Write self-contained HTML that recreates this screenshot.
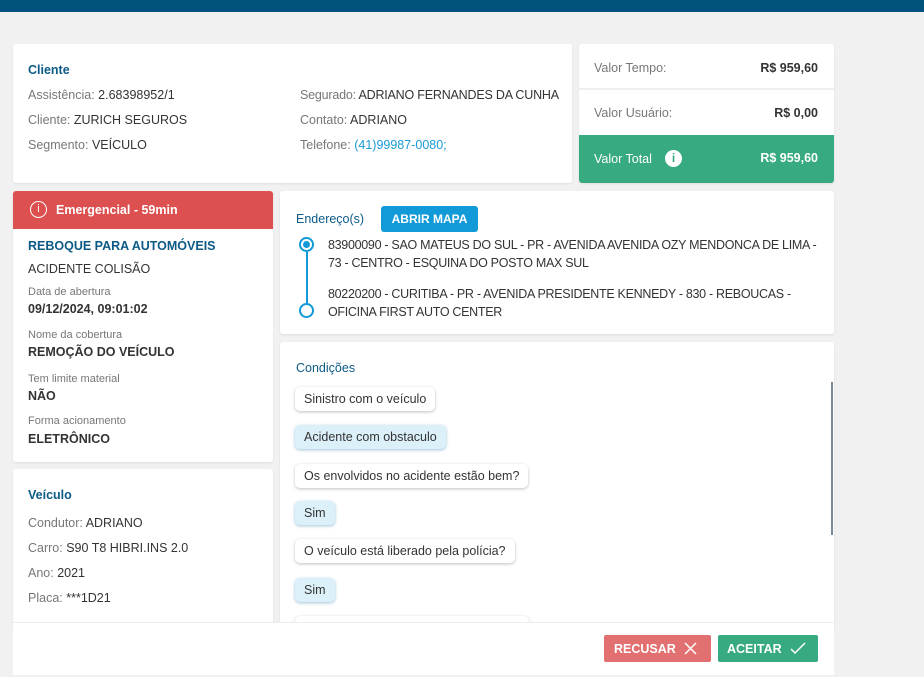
<!DOCTYPE html>
<html><head><meta charset="utf-8"><style>
*{margin:0;padding:0;box-sizing:border-box}
body{width:924px;height:677px;background:#f1f1f1;font-family:"Liberation Sans",sans-serif;font-size:12.5px;color:#333;position:relative;overflow:hidden}
.abs{position:absolute}
.card{position:absolute;background:#fff;border-radius:3px;box-shadow:0 1px 2px rgba(0,0,0,.08)}
.lbl{color:#777}
.t{color:#0d5a86;font-weight:bold;font-size:12.5px}
.chip{position:absolute;left:295px;height:24px;line-height:24px;padding:0 9px;border-radius:5px;background:#fff;box-shadow:0 1px 3px rgba(0,0,0,.25);font-size:12.5px;color:#333;white-space:nowrap}
.chip.b{background:#dcf0f9;box-shadow:0 1px 3px rgba(40,120,170,.45)}
.sm{font-size:11px;color:#777}
.bd{font-weight:bold;font-size:12.5px;color:#333}
</style></head><body>
<div class="abs" style="left:0;top:0;width:924px;height:12px;background:#02527e"></div>

<div class="card" style="left:13px;top:44px;width:559px;height:139px">
 <div class="abs t" style="left:15px;top:19px">Cliente</div>
 <div class="abs" style="left:15px;top:44px"><span class="lbl">Assistência:</span> 2.68398952/1</div>
 <div class="abs" style="left:15px;top:69px"><span class="lbl">Cliente:</span> ZURICH SEGUROS</div>
 <div class="abs" style="left:15px;top:94px"><span class="lbl">Segmento:</span> VEÍCULO</div>
 <div class="abs" style="left:287px;top:44px;white-space:nowrap;letter-spacing:-0.2px"><span class="lbl">Segurado:</span> ADRIANO FERNANDES DA CUNHA</div>
 <div class="abs" style="left:287px;top:69px"><span class="lbl">Contato:</span> ADRIANO</div>
 <div class="abs" style="left:287px;top:94px"><span class="lbl">Telefone:</span> <span style="color:#1a9ad6">(41)99987-0080;</span></div>
</div>

<div class="card" style="left:579px;top:44px;width:255px;height:139px;overflow:hidden">
 <div class="abs lbl" style="left:15px;top:17px">Valor Tempo:</div>
 <div class="abs bd" style="right:16px;top:17px">R$ 959,60</div>
 <div class="abs" style="left:0;top:44px;width:255px;height:2px;background:#eee"></div>
 <div class="abs lbl" style="left:15px;top:62px">Valor Usuário:</div>
 <div class="abs bd" style="right:16px;top:62px">R$ 0,00</div>
 <div class="abs" style="left:0;top:91px;width:255px;height:48px;background:#37aa7f"></div>
 <div class="abs" style="left:15px;top:108px;color:#fff">Valor Total</div>
 <div class="abs" style="left:86px;top:106px;width:17px;height:17px;border-radius:50%;background:#fff;color:#37aa7f;font-weight:bold;font-size:12px;text-align:center;line-height:17px">i</div>
 <div class="abs bd" style="right:16px;top:107px;color:#fff">R$ 959,60</div>
</div>

<div class="card" style="left:13px;top:191px;width:260px;height:271px;overflow:hidden">
 <div class="abs" style="left:0;top:0;width:260px;height:38px;background:#dc5050"></div>
 <div class="abs" style="left:17px;top:10px;width:17px;height:17px;border:1.5px solid #fff;border-radius:50%;color:#fff;font-size:11px;text-align:center;line-height:14px">i</div>
 <div class="abs" style="left:43px;top:12px;color:#fff;font-weight:bold;font-size:12.5px">Emergencial - 59min</div>
 <div class="abs t" style="left:15px;top:48px">REBOQUE PARA AUTOMÓVEIS</div>
 <div class="abs" style="left:15px;top:71px">ACIDENTE COLISÃO</div>
 <div class="abs sm" style="left:15px;top:95px">Data de abertura</div>
 <div class="abs bd" style="left:15px;top:111px">09/12/2024, 09:01:02</div>
 <div class="abs sm" style="left:15px;top:138px">Nome da cobertura</div>
 <div class="abs bd" style="left:15px;top:154px">REMOÇÃO DO VEÍCULO</div>
 <div class="abs sm" style="left:15px;top:182px">Tem limite material</div>
 <div class="abs bd" style="left:15px;top:198px">NÃO</div>
 <div class="abs sm" style="left:15px;top:224px">Forma acionamento</div>
 <div class="abs bd" style="left:15px;top:241px">ELETRÔNICO</div>
</div>

<div class="card" style="left:13px;top:469px;width:260px;height:160px">
 <div class="abs t" style="left:15px;top:19px">Veículo</div>
 <div class="abs" style="left:15px;top:47px"><span class="lbl">Condutor:</span> ADRIANO</div>
 <div class="abs" style="left:15px;top:72px"><span class="lbl">Carro:</span> S90 T8 HIBRI.INS 2.0</div>
 <div class="abs" style="left:15px;top:97px"><span class="lbl">Ano:</span> 2021</div>
 <div class="abs" style="left:15px;top:122px"><span class="lbl">Placa:</span> ***1D21</div>
</div>

<div class="card" style="left:280px;top:191px;width:554px;height:143px">
 <div class="abs t" style="left:16px;top:21px;font-weight:normal">Endereço(s)</div>
 <div class="abs" style="left:101px;top:15px;width:97px;height:26px;background:#129ad8;border-radius:3px;color:#fff;font-weight:bold;font-size:12px;text-align:center;line-height:26px">ABRIR MAPA</div>
 <div class="abs" style="left:19px;top:46px;width:15px;height:15px;border:2px solid #129ad8;border-radius:50%"></div>
 <div class="abs" style="left:23px;top:50px;width:7px;height:7px;background:#129ad8;border-radius:50%"></div>
 <div class="abs" style="left:25.5px;top:61px;width:2px;height:52px;background:#129ad8"></div>
 <div class="abs" style="left:19px;top:112px;width:15px;height:15px;border:2px solid #129ad8;border-radius:50%"></div>
 <div class="abs" style="left:48px;top:45px;width:520px;line-height:18px;letter-spacing:-0.3px"><span style="white-space:nowrap">83900090 - SAO MATEUS DO SUL - PR - AVENIDA AVENIDA OZY MENDONCA DE LIMA -</span><br>73 - CENTRO - ESQUINA DO POSTO MAX SUL</div>
 <div class="abs" style="left:48px;top:94px;width:520px;line-height:18px;letter-spacing:-0.3px">80220200 - CURITIBA - PR - AVENIDA PRESIDENTE KENNEDY - 830 - REBOUCAS -<br>OFICINA FIRST AUTO CENTER</div>
</div>

<div class="card" style="left:280px;top:342px;width:554px;height:290px">
 <div class="abs t" style="left:16px;top:19px;font-weight:normal">Condições</div>
 <div class="abs" style="left:551px;top:40px;width:2px;height:153px;background:#7a8a99"></div>
</div>
<div class="chip" style="top:387px">Sinistro com o veículo</div>
<div class="chip b" style="top:425px">Acidente com obstaculo</div>
<div class="chip" style="top:464px">Os envolvidos no acidente estão bem?</div>
<div class="chip b" style="top:501px">Sim</div>
<div class="chip" style="top:539px">O veículo está liberado pela polícia?</div>
<div class="chip b" style="top:578px">Sim</div>
<div class="chip" style="top:616px;width:234px"></div>

<div class="abs" style="left:13px;top:622px;width:821px;height:53px;background:#fff;border-top:1px solid #eee"></div>
<div class="abs" style="left:604px;top:635px;width:107px;height:27px;background:#e27070;border-radius:2px;color:#fff;font-weight:bold;font-size:12.5px;line-height:28px;padding-left:10px">RECUSAR
 <svg class="abs" style="left:80px;top:7px" width="13" height="13" viewBox="0 0 13 13"><path d="M1 1L12 12M12 1L1 12" stroke="#fff" stroke-width="1.5"/></svg></div>
<div class="abs" style="left:718px;top:635px;width:100px;height:27px;background:#37aa7f;border-radius:2px;color:#fff;font-weight:bold;font-size:12.5px;line-height:28px;padding-left:9px">ACEITAR
 <svg class="abs" style="left:72px;top:7px" width="16" height="13" viewBox="0 0 16 13"><path d="M1 7L5 11L15 1" stroke="#fff" stroke-width="1.5" fill="none"/></svg></div>
</body></html>
